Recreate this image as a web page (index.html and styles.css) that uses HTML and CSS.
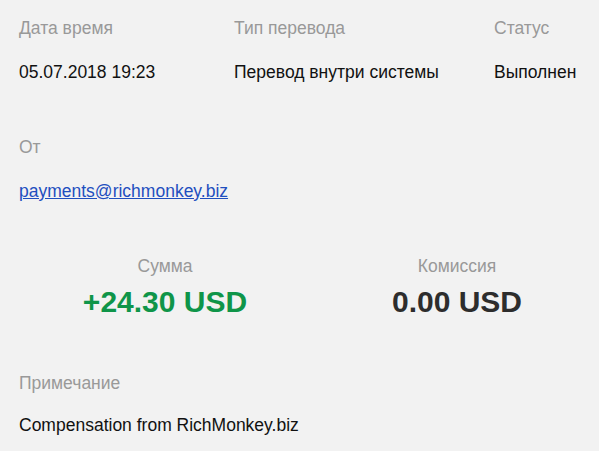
FILE: index.html
```html
<!DOCTYPE html>
<html lang="ru">
<head>
<meta charset="utf-8">
<link rel="stylesheet" href="styles.css">
</head>
<body>
<div class="page">
  <div class="meta">
    <div class="field">
      <div class="label">Дата время</div>
      <div class="value">05.07.2018 19:23</div>
    </div>
    <div class="field">
      <div class="label">Тип перевода</div>
      <div class="value">Перевод внутри системы</div>
    </div>
    <div class="field">
      <div class="label">Статус</div>
      <div class="value">Выполнен</div>
    </div>
  </div>
  <div class="from">
    <div class="label">От</div>
    <div class="value"><a class="link" href="#">payments@richmonkey.biz</a></div>
  </div>
  <div class="amounts">
    <div class="amount">
      <div class="label">Сумма</div>
      <div class="sum plus">+24.30 USD</div>
    </div>
    <div class="amount">
      <div class="label">Комиссия</div>
      <div class="sum">0.00 USD</div>
    </div>
  </div>
  <div class="note">
    <div class="label">Примечание</div>
    <div class="value">Compensation from RichMonkey.biz</div>
  </div>
</div>
</body>
</html>
```
FILE: styles.css
```css
html, body {
  margin: 0;
  padding: 0;
  background: #f2f2f2;
  overflow: hidden;
}
body {
  font-family: "Liberation Sans", Arial, sans-serif;
  font-size: 17.5px;
  line-height: 20px;
  color: #111;
}
.page {
  padding: 18px 0 0 19px;
}
.meta {
  display: grid;
  grid-template-columns: 215px 260px auto;
}
.label {
  color: #999;
}
.field .value {
  margin-top: 24px;
}
.note .value {
  margin-top: 22px;
}
.from {
  margin-top: 55px;
}
.from .value {
  margin-top: 24px;
}
.link {
  color: #1f4fbf;
  text-decoration: underline;
}
.amounts {
  margin-top: 55px;
  display: grid;
  grid-template-columns: 292px 292px;
  text-align: center;
}
.sum {
  margin-top: 8px;
  font-size: 30px;
  line-height: 36px;
  font-weight: bold;
  color: #2d2d2d;
}
.sum.plus {
  color: #0f9549;
}
.note {
  margin-top: 53px;
}
```
